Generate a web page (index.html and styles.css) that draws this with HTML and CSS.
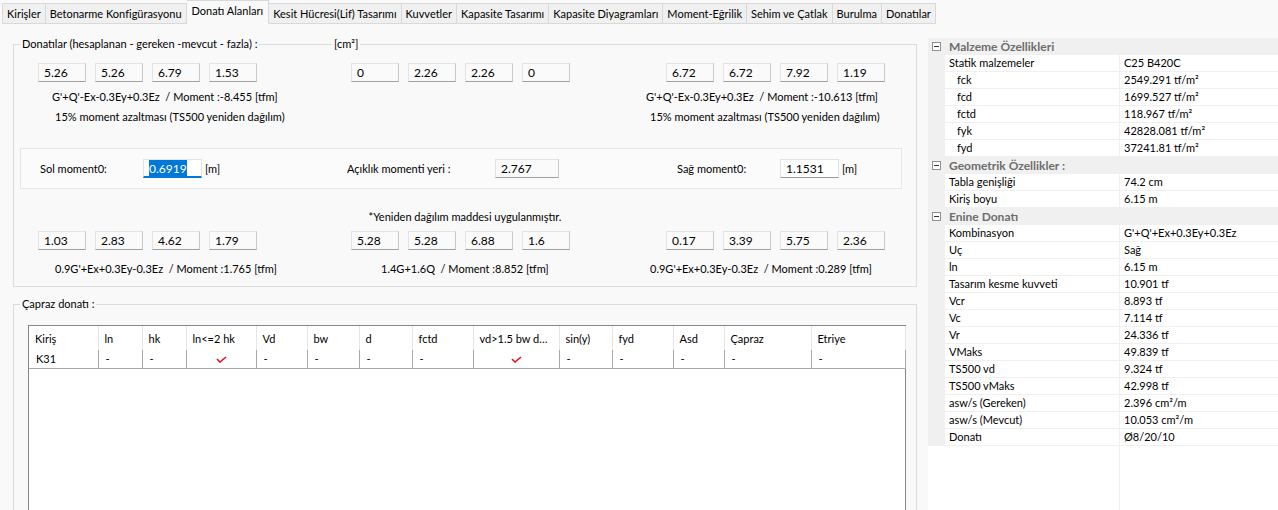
FILE: index.html
```html
<!DOCTYPE html>
<html lang="tr">
<head>
  <meta charset="UTF-8">
  <title>Donatı Alanları</title>
  <link rel="stylesheet" href="styles.css">
</head>
<body>
  <div class="tabs">
    <div class="tab">Kirişler</div>
    <div class="tab">Betonarme Konfigürasyonu</div>
    <div class="tab active">Donatı Alanları</div>
    <div class="tab">Kesit Hücresi(Lif) Tasarımı</div>
    <div class="tab">Kuvvetler</div>
    <div class="tab">Kapasite Tasarımı</div>
    <div class="tab">Kapasite Diyagramları</div>
    <div class="tab">Moment-Eğrilik</div>
    <div class="tab">Sehim ve Çatlak</div>
    <div class="tab">Burulma</div>
    <div class="tab">Donatılar</div>
  </div>

  <div class="main">
    <div class="left">
      <!-- donati alanlari -->
      <div class="group group-areas">
        <span class="group-title">Donatılar (hesaplanan - gereken -mevcut - fazla) :</span>
        <span class="unit-title">[cm²]</span>

        <div class="cols">
          <div class="col">
            <div class="boxes">
              <span class="box">5.26</span><span class="box">5.26</span><span class="box">6.79</span><span class="box">1.53</span>
            </div>
            <div class="lbls lbls-top">
              <div class="lbl shift-a">G'+Q'-Ex-0.3Ey+0.3Ez&nbsp; / Moment :-8.455 [tfm]</div>
              <div class="lbl shift-a2">15% moment azaltması (TS500 yeniden dağılım)</div>
            </div>
          </div>
          <div class="col">
            <div class="boxes">
              <span class="box">0</span><span class="box">2.26</span><span class="box">2.26</span><span class="box">0</span>
            </div>
          </div>
          <div class="col">
            <div class="boxes">
              <span class="box">6.72</span><span class="box">6.72</span><span class="box">7.92</span><span class="box">1.19</span>
            </div>
            <div class="lbls lbls-top">
              <div class="lbl shift-b">G'+Q'-Ex-0.3Ey+0.3Ez&nbsp; / Moment :-10.613 [tfm]</div>
              <div class="lbl shift-b2">15% moment azaltması (TS500 yeniden dağılım)</div>
            </div>
          </div>
        </div>

        <div class="moment-panel">
          <div class="seg seg-sol">
            <span class="seg-label">Sol moment0:</span>
            <span class="input focused"><span class="sel">0.6919</span></span>
            <span class="unit">[m]</span>
          </div>
          <div class="seg seg-acik">
            <span class="seg-label wide">Açıklık momenti yeri :</span>
            <span class="box box-wide">2.767</span>
          </div>
          <div class="seg">
            <span class="seg-label">Sağ moment0:</span>
            <span class="input">1.1531</span>
            <span class="unit">[m]</span>
          </div>
        </div>

        <div class="note">*Yeniden dağılım maddesi uygulanmıştır.</div>

        <div class="cols cols-low">
          <div class="col">
            <div class="boxes">
              <span class="box">1.03</span><span class="box">2.83</span><span class="box">4.62</span><span class="box">1.79</span>
            </div>
            <div class="lbls lbls-low">
              <div class="lbl shift-a2">0.9G'+Ex+0.3Ey-0.3Ez&nbsp; / Moment :1.765 [tfm]</div>
            </div>
          </div>
          <div class="col">
            <div class="boxes">
              <span class="box">5.28</span><span class="box">5.28</span><span class="box">6.88</span><span class="box">1.6</span>
            </div>
            <div class="lbls lbls-low">
              <div class="lbl shift-c">1.4G+1.6Q&nbsp; / Moment :8.852 [tfm]</div>
            </div>
          </div>
          <div class="col">
            <div class="boxes">
              <span class="box">0.17</span><span class="box">3.39</span><span class="box">5.75</span><span class="box">2.36</span>
            </div>
            <div class="lbls lbls-low">
              <div class="lbl shift-b2">0.9G'+Ex+0.3Ey-0.3Ez&nbsp; / Moment :0.289 [tfm]</div>
            </div>
          </div>
        </div>
      </div>

      <!-- capraz donati -->
      <div class="group group-cross">
        <span class="group-title">Çapraz donatı :</span>
        <div class="list">
          <table>
            <colgroup>
              <col style="width:69px"><col style="width:44px"><col style="width:44px"><col style="width:70px">
              <col style="width:51px"><col style="width:52px"><col style="width:53px"><col style="width:61px">
              <col style="width:86px"><col style="width:53px"><col style="width:61px"><col style="width:51px">
              <col style="width:87px"><col style="width:94px">
            </colgroup>
            <thead>
              <tr>
                <th>Kiriş</th><th>ln</th><th>hk</th><th>ln&lt;=2 hk</th><th>Vd</th><th>bw</th><th>d</th>
                <th>fctd</th><th>vd&gt;1.5 bw d…</th><th>sin(y)</th><th>fyd</th><th>Asd</th><th>Çapraz</th><th>Etriye</th>
              </tr>
            </thead>
            <tbody>
              <tr>
                <td>K31</td><td>-</td><td>-</td>
                <td class="ok"><svg width="11" height="7" viewBox="0 0 11 7"><path d="M1 3 L4 6 L10 1" fill="none" stroke="#e81123" stroke-width="1.6"/></svg></td>
                <td>-</td><td>-</td><td>-</td><td>-</td>
                <td class="ok"><svg width="11" height="7" viewBox="0 0 11 7"><path d="M1 3 L4 6 L10 1" fill="none" stroke="#e81123" stroke-width="1.6"/></svg></td>
                <td>-</td><td>-</td><td>-</td><td>-</td><td>-</td>
              </tr>
            </tbody>
          </table>
        </div>
      </div>
    </div>

    <!-- property grid -->
    <div class="props">
      <div class="pg-cat"><span class="pg-toggle"><i class="minus"></i></span>Malzeme Özellikleri</div>
      <div class="pg-row"><span class="pg-gutter"></span><span class="pg-name">Statik malzemeler</span><span class="pg-value">C25 B420C</span></div>
      <div class="pg-row"><span class="pg-gutter"></span><span class="pg-name sub">fck</span><span class="pg-value">2549.291 tf/m²</span></div>
      <div class="pg-row"><span class="pg-gutter"></span><span class="pg-name sub">fcd</span><span class="pg-value">1699.527 tf/m²</span></div>
      <div class="pg-row"><span class="pg-gutter"></span><span class="pg-name sub">fctd</span><span class="pg-value">118.967 tf/m²</span></div>
      <div class="pg-row"><span class="pg-gutter"></span><span class="pg-name sub">fyk</span><span class="pg-value">42828.081 tf/m²</span></div>
      <div class="pg-row"><span class="pg-gutter"></span><span class="pg-name sub">fyd</span><span class="pg-value">37241.81 tf/m²</span></div>
      <div class="pg-cat"><span class="pg-toggle"><i class="minus"></i></span>Geometrik Özellikler :</div>
      <div class="pg-row"><span class="pg-gutter"></span><span class="pg-name">Tabla genişliği</span><span class="pg-value">74.2 cm</span></div>
      <div class="pg-row"><span class="pg-gutter"></span><span class="pg-name">Kiriş boyu</span><span class="pg-value">6.15 m</span></div>
      <div class="pg-cat"><span class="pg-toggle"><i class="minus"></i></span>Enine Donatı</div>
      <div class="pg-row"><span class="pg-gutter"></span><span class="pg-name">Kombinasyon</span><span class="pg-value">G'+Q'+Ex+0.3Ey+0.3Ez</span></div>
      <div class="pg-row"><span class="pg-gutter"></span><span class="pg-name">Uç</span><span class="pg-value">Sağ</span></div>
      <div class="pg-row"><span class="pg-gutter"></span><span class="pg-name">ln</span><span class="pg-value">6.15 m</span></div>
      <div class="pg-row"><span class="pg-gutter"></span><span class="pg-name">Tasarım kesme kuvveti</span><span class="pg-value">10.901 tf</span></div>
      <div class="pg-row"><span class="pg-gutter"></span><span class="pg-name">Vcr</span><span class="pg-value">8.893 tf</span></div>
      <div class="pg-row"><span class="pg-gutter"></span><span class="pg-name">Vc</span><span class="pg-value">7.114 tf</span></div>
      <div class="pg-row"><span class="pg-gutter"></span><span class="pg-name">Vr</span><span class="pg-value">24.336 tf</span></div>
      <div class="pg-row"><span class="pg-gutter"></span><span class="pg-name">VMaks</span><span class="pg-value">49.839 tf</span></div>
      <div class="pg-row"><span class="pg-gutter"></span><span class="pg-name">TS500 vd</span><span class="pg-value">9.324 tf</span></div>
      <div class="pg-row"><span class="pg-gutter"></span><span class="pg-name">TS500 vMaks</span><span class="pg-value">42.998 tf</span></div>
      <div class="pg-row"><span class="pg-gutter"></span><span class="pg-name">asw/s (Gereken)</span><span class="pg-value">2.396 cm²/m</span></div>
      <div class="pg-row"><span class="pg-gutter"></span><span class="pg-name">asw/s (Mevcut)</span><span class="pg-value">10.053 cm²/m</span></div>
      <div class="pg-row"><span class="pg-gutter"></span><span class="pg-name">Donatı</span><span class="pg-value">Ø8/20/10</span></div>
      <div class="pg-fill"></div>
    </div>
  </div>
</body>
</html>
```

FILE: styles.css
```css
* {
  margin: 0;
  padding: 0;
  box-sizing: border-box;
}

body {
  font-family: "Segoe UI", Lato, sans-serif;
  font-size: 11px;
  color: #000;
  background: #f9f9f9;
  width: 1278px;
  height: 510px;
  overflow: hidden;
}

/* tab strip */
.tabs {
  display: flex;
  align-items: flex-end;
  height: 24px;
  padding-left: 2px;
}

.tab {
  height: 21px;
  line-height: 20px;
  padding: 0 4px;
  background: #f0f0f0;
  border: 1px solid #d9d9d9;
  border-left: none;
  white-space: nowrap;
}

.tab:first-child {
  border-left: 1px solid #d9d9d9;
}

.tab.active {
  height: 24px;
  line-height: 19px;
  background: #f9f9f9;
  border-bottom-color: #f9f9f9;
  padding: 0 5px;
}

.main {
  display: flex;
  height: 486px;
}

.left {
  width: 928px;
  padding: 20px 11px 0 13px;
}

/* group boxes */
.group {
  position: relative;
  border: 1px solid #dcdcdc;
}

.group-title,
.unit-title {
  position: absolute;
  top: -9px;
  left: 6px;
  padding: 0 2px;
  line-height: 16px;
  background: #f9f9f9;
  white-space: nowrap;
}

.unit-title {
  left: 318px;
}

.group-areas {
  padding: 18px 0 7px 0;
}

.cols {
  display: grid;
  grid-template-columns: 313px 315px 219px;
  padding-left: 24px;
}

.cols-low {
  margin-top: 4px;
}

.boxes {
  display: flex;
  gap: 9px;
}

.box {
  display: block;
  width: 48px;
  height: 19px;
  line-height: 17px;
  padding-left: 5px;
  font-size: 12px;
  background: #fafafa;
  border: 1px solid #e3e3e3;
  border-right-color: #c9c9c9;
  border-bottom-color: #a0a0a0;
}

.box-wide {
  width: 64px;
}

.lbls-top {
  margin-top: 5px;
}

.lbls-low {
  margin-top: 9px;
}

.lbl {
  line-height: 20px;
  white-space: nowrap;
}

.shift-a { padding-left: 14px; }
.shift-a2 { padding-left: 17px; }
.shift-b { margin-left: -20px; }
.shift-b2 { margin-left: -16px; }
.shift-c { padding-left: 30px; }

/* moment0 panel */
.moment-panel {
  display: flex;
  align-items: center;
  height: 41px;
  margin: 21px 14px 0 6px;
  padding-left: 19px;
  background: #fbfbfb;
  border: 1px solid #e6e6e6;
}

.seg {
  display: flex;
  align-items: center;
}

.seg-sol {
  width: 307px;
}

.seg-acik {
  width: 330px;
}

.seg-label {
  width: 103px;
}

.seg-label.wide {
  width: 148px;
}

.input {
  display: block;
  width: 59px;
  height: 19px;
  line-height: 17px;
  padding-left: 5px;
  font-size: 12px;
  background: #fff;
  border: 1px solid #e3e3e3;
  border-bottom-color: #9a9a9a;
}

.input.focused {
  border-bottom: 2px solid #0078d7;
}

.sel {
  background: #0078d7;
  color: #fff;
  padding: 1px 0;
}

.unit {
  margin-left: 3px;
}

.note {
  margin-top: 18px;
  line-height: 20px;
  text-align: center;
}

/* capraz donati list */
.group-cross {
  margin-top: 17px;
  padding: 20px 10px 0 14px;
}

.list {
  height: 200px;
  background: #fff;
  border: 1px solid #828790;
}

table {
  width: 876px;
  table-layout: fixed;
  border-collapse: collapse;
}

th {
  height: 24px;
  padding-left: 6px;
  font-weight: normal;
  text-align: left;
  border-right: 1px solid #e5e5e5;
  white-space: nowrap;
  overflow: hidden;
}

td {
  height: 18px;
  padding-left: 7px;
  border-right: 1px solid #a9a9a9;
  border-bottom: 1px solid #a9a9a9;
  line-height: 16px;
}

td.ok {
  padding-left: 0;
  text-align: center;
}

/* property grid */
.props {
  flex: 1;
  display: flex;
  flex-direction: column;
  margin-top: 14px;
  background: #fff;
}

.pg-cat {
  display: flex;
  align-items: center;
  height: 17px;
  background: #f0f0f0;
  color: #6d6d6d;
  font-weight: bold;
  font-size: 12px;
  padding-right: 4px;
}

.pg-toggle {
  display: flex;
  align-items: center;
  justify-content: center;
  width: 17px;
  height: 17px;
  margin-right: 4px;
}

.minus {
  position: relative;
  display: block;
  width: 9px;
  height: 9px;
  border: 1px solid #919191;
  background: #fff;
}

.minus::after {
  content: "";
  position: absolute;
  left: 1px;
  top: 3px;
  width: 5px;
  height: 1px;
  background: #333;
}

.pg-row {
  display: flex;
  height: 17px;
  line-height: 16px;
  white-space: nowrap;
}

.pg-gutter {
  width: 17px;
  background: #f0f0f0;
}

.pg-name {
  width: 175px;
  padding-left: 4px;
  border-right: 1px solid #f0f0f0;
  border-bottom: 1px solid #f0f0f0;
}

.pg-name.sub {
  padding-left: 12px;
}

.pg-value {
  flex: 1;
  padding-left: 4px;
  border-bottom: 1px solid #f0f0f0;
}

.pg-fill {
  flex: 1;
  background: linear-gradient(to right, #fff 191px, #f0f0f0 191px, #f0f0f0 192px, #fff 192px);
}
```
